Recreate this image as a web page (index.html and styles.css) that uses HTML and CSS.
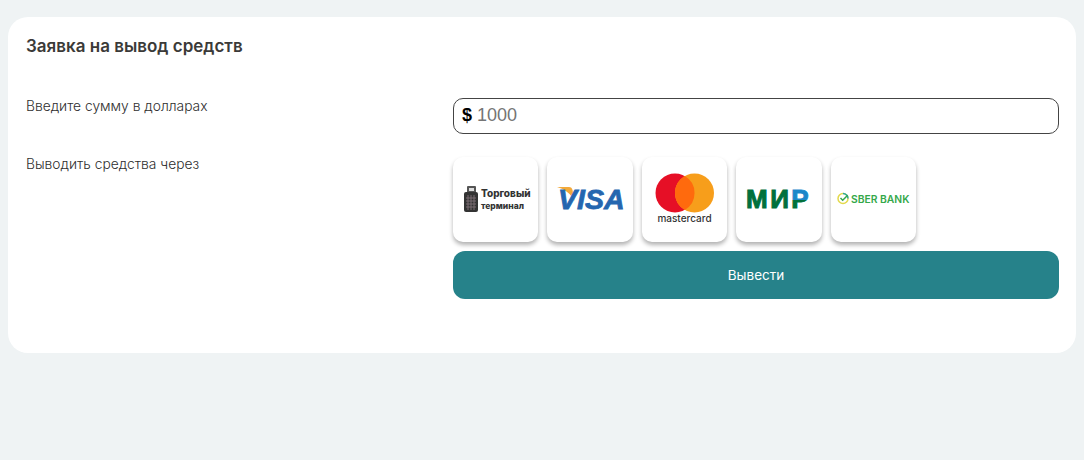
FILE: index.html
```html
<!DOCTYPE html>
<html lang="ru">
<head>
    <meta charset="UTF-8">
    <title>Заявка на вывод средств</title>
    <link rel="stylesheet" href="styles.css">
</head>
<body>
<div class="card">
    <h1 class="title">Заявка на вывод средств</h1>
    <div class="row row-amount">
        <label class="label" for="amount">Введите сумму в долларах</label>
        <div class="amount">
            <span class="currency">$</span>
            <input id="amount" class="amount-input" type="text" placeholder="1000">
        </div>
    </div>
    <div class="row">
        <div class="label">Выводить средства через</div>
        <div class="methods">
            <div class="tiles">
                <div class="tile">
                    <svg class="logo" width="85" height="85" viewBox="0 0 85 85">
                        <rect x="14" y="29" width="9" height="8" rx="1" fill="#555"/>
                        <rect x="16" y="31" width="5" height="3" fill="#ddd"/>
                        <rect x="11" y="35" width="14" height="20" rx="2" fill="#333"/>
                        <path d="M13 41h10M13 44h10M13 47h10M13 50h10M15 38v15M18 38v15M21 38v15" stroke="#7b6d72" stroke-width="1"/>
                        <text class="logo-term" x="28" y="40">Торговый</text>
                        <text class="logo-term small" x="28" y="52">терминал</text>
                    </svg>
                </div>
                <div class="tile">
                    <svg class="logo" width="85" height="85" viewBox="0 0 85 85">
                        <path d="M10 30h12c2 0 3 1 3.500 3l2 11C24 37 18 32 10 30z" fill="#f2a93b"/>
                        <text class="logo-visa" x="11" y="52">VISA</text>
                    </svg>
                </div>
                <div class="tile">
                    <svg class="logo" width="85" height="85" viewBox="0 0 85 85">
                        <circle cx="33" cy="36" r="19.500" fill="#e60f26"/>
                        <circle cx="52.500" cy="36" r="19.500" fill="#f79e1b"/>
                        <path d="M42.750 19.100a19.500 19.500 0 0 1 0 33.800a19.500 19.500 0 0 1 0-33.800z" fill="#ff6a0d"/>
                        <text class="logo-mc" x="42.500" y="65" text-anchor="middle">mastercard</text>
                    </svg>
                </div>
                <div class="tile">
                    <svg class="logo" width="85" height="85" viewBox="0 0 85 85">
                        <defs>
                            <linearGradient id="mirFlag" x1="0" y1="0" x2="0" y2="1">
                                <stop offset="0.520" stop-color="#1b87c9"/>
                                <stop offset="0.520" stop-color="#00703c"/>
                            </linearGradient>
                        </defs>
                        <text class="logo-mir" x="10" y="51">МИ<tspan fill="url(#mirFlag)" stroke="url(#mirFlag)">Р</tspan></text>
                    </svg>
                </div>
                <div class="tile">
                    <svg class="logo" width="85" height="85" viewBox="0 0 85 85">
                        <circle cx="12" cy="41.500" r="5" fill="none" stroke="#e3d94c" stroke-width="1.500"/>
                        <path d="M12 36.500a5 5 0 0 1 5 5" fill="none" stroke="#2aa9a0" stroke-width="1.500"/>
                        <path d="M9.500 41l2.200 2.200 5-5" fill="none" stroke="#35a84a" stroke-width="1.500"/>
                        <text class="logo-sber" x="20" y="45.500">SBER BANK</text>
                    </svg>
                </div>
            </div>
            <button class="submit" type="button">Вывести</button>
        </div>
    </div>
</div>
</body>
</html>
```
FILE: styles.css
```css
* {
    box-sizing: border-box;
}

body {
    margin: 0;
    height: 460px;
    padding: 17px 8px 0;
    background: #eff3f4;
    font-family: Inter, "Noto Sans", sans-serif;
    color: #3a3a3a;
    overflow: hidden;
}

.card {
    height: 336px;
    padding: 18px 17px 0 18px;
    background: #fff;
    border-radius: 20px;
}

.title {
    margin: 0;
    height: 63px;
    font-size: 17px;
    line-height: 22px;
    font-weight: 600;
    color: #3b3a38;
}

.row {
    display: grid;
    grid-template-columns: 427px 606px;
}

.row-amount {
    height: 59px;
}

.row-amount .label {
    padding-top: 1px;
}

.label {
    font-size: 13.800px;
    line-height: 14px;
    font-weight: 300;
    color: #2e2e2e;
}

.amount {
    display: flex;
    align-items: center;
    height: 36px;
    padding: 0 8px 2px;
    border: 1px solid #444;
    border-radius: 10px;
}

.currency {
    font-family: "Liberation Sans", sans-serif;
    font-size: 18px;
    font-weight: 700;
    color: #000;
    margin-right: 5px;
}

.amount-input {
    flex: 1;
    min-width: 0;
    padding: 0;
    border: 0;
    outline: 0;
    font-family: "Liberation Sans", sans-serif;
    font-size: 18px;
}

.amount-input::placeholder {
    color: #757575;
}

.tiles {
    display: flex;
    gap: 9px;
    margin-bottom: 9px;
}

.tile {
    width: 85.400px;
    height: 85px;
    background: #fff;
    border-radius: 10px;
    box-shadow: 0 3px 4px rgba(0, 0, 0, 0.3);
}

.logo {
    display: block;
}

.logo-term {
    font-family: Inter, sans-serif;
    font-size: 10px;
    font-weight: 800;
    fill: #333;
}

.logo-term.small {
    font-size: 8.500px;
}

.logo-visa {
    font-family: "Liberation Sans", sans-serif;
    font-size: 28.500px;
    font-weight: 700;
    font-style: italic;
    fill: #2566af;
    stroke: #2566af;
    stroke-width: 0.800px;
}

.logo-mc {
    font-family: Inter, sans-serif;
    font-size: 10px;
    font-weight: 500;
    fill: #333;
}

.logo-mir {
    font-family: "Liberation Sans", sans-serif;
    font-size: 26px;
    font-weight: 700;
    fill: #00703c;
    stroke: #00703c;
    stroke-width: 1px;
    letter-spacing: 2.500px;
}

.logo-sber {
    font-family: Inter, sans-serif;
    font-size: 10.300px;
    font-weight: 600;
    fill: #35a84a;
}

.submit {
    display: block;
    width: 100%;
    height: 48px;
    padding: 0 0 1px;
    border: 0;
    border-radius: 12px;
    background: #26828a;
    color: #fff;
    font-family: Inter, sans-serif;
    font-size: 13.500px;
    font-weight: 400;
}
```
